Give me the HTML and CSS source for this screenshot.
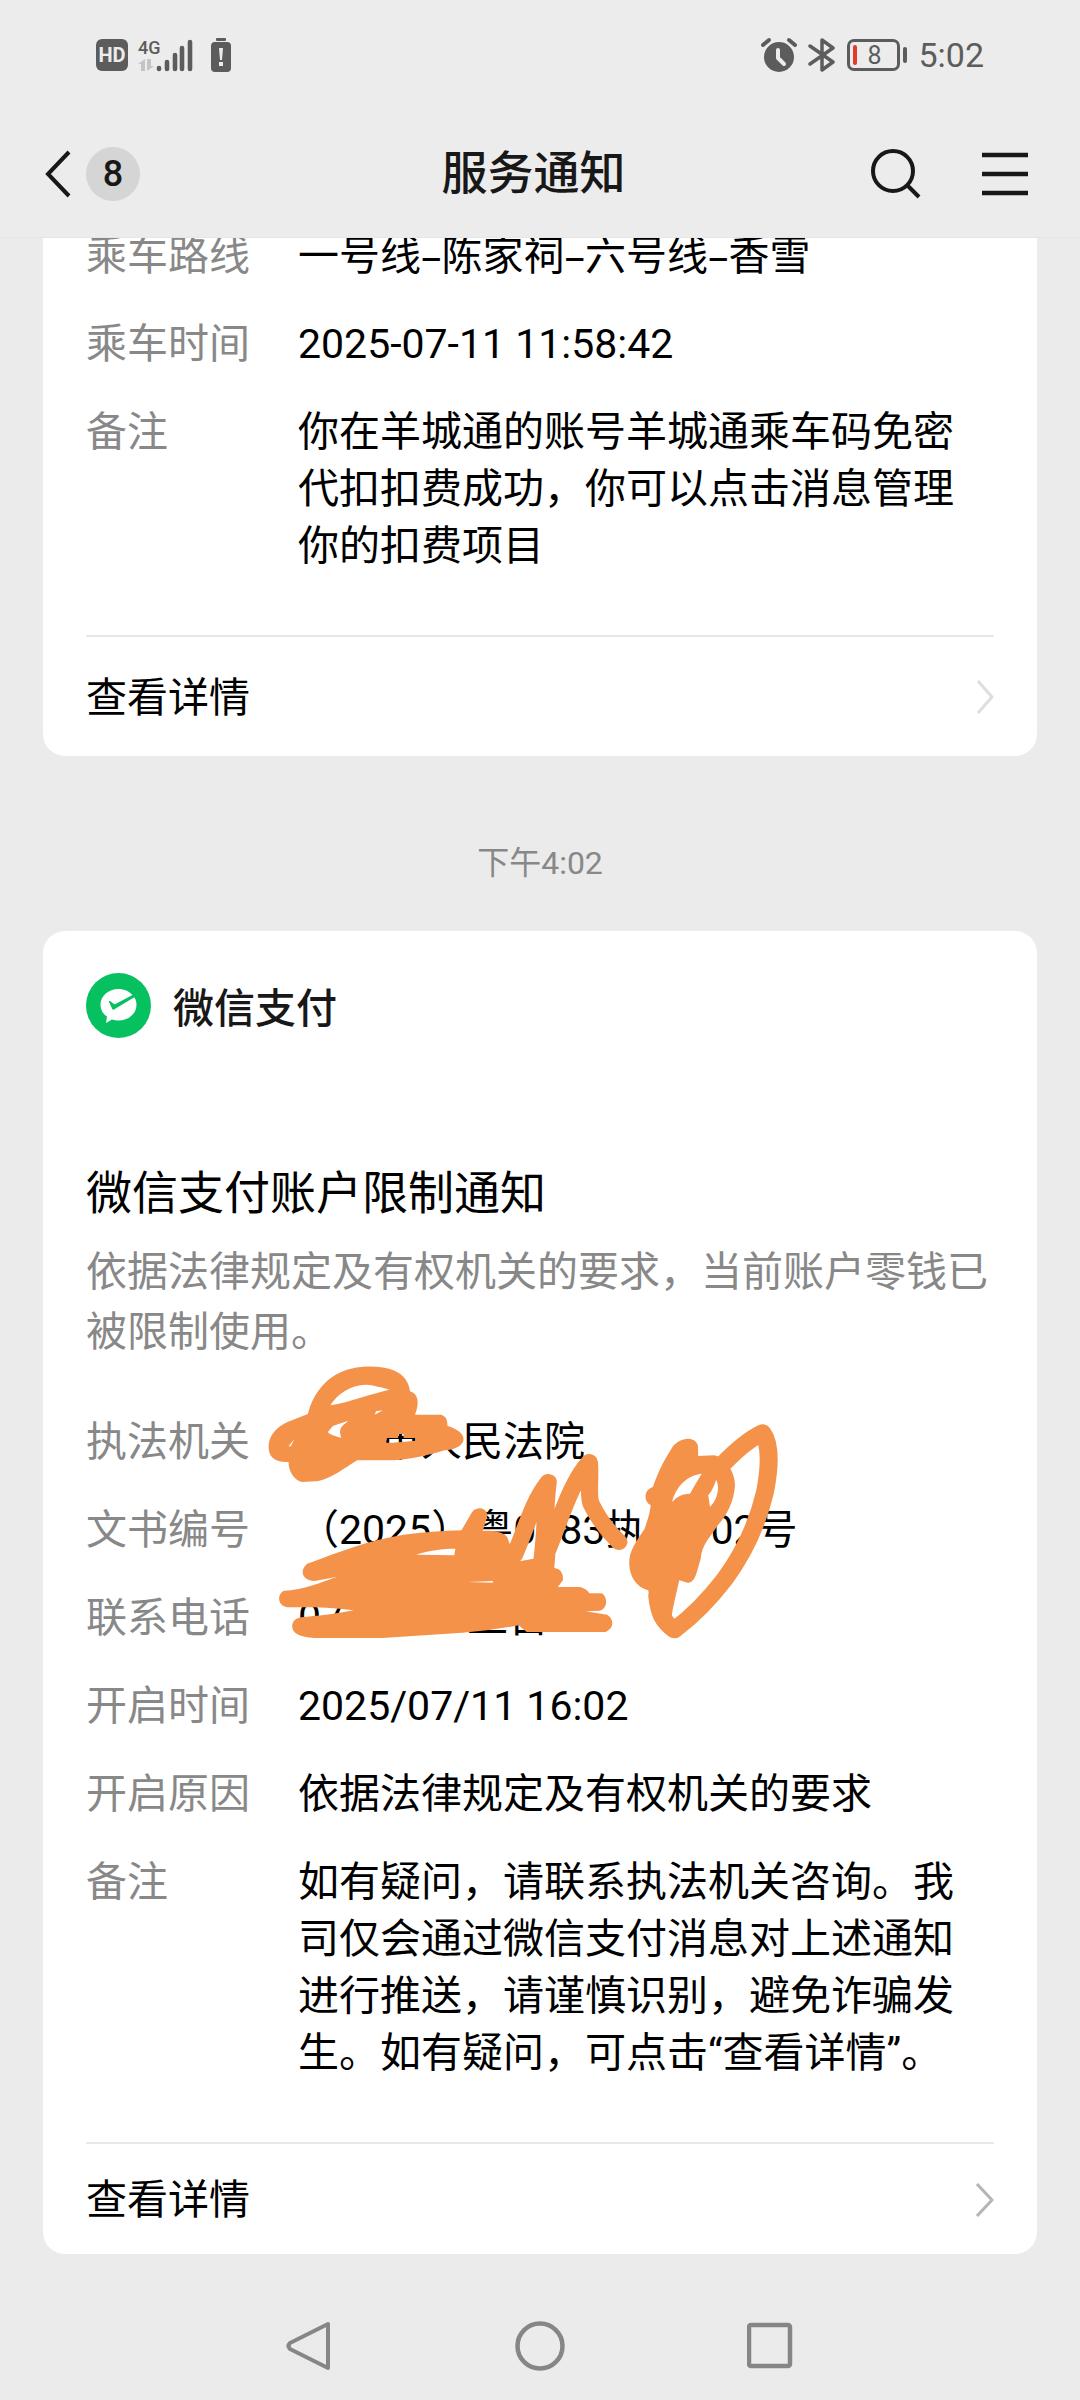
FILE: index.html
```html
<!DOCTYPE html>
<html lang="zh-CN">
<head>
<meta charset="utf-8">
<meta name="viewport" content="width=device-width, initial-scale=1">
<title>服务通知</title>
<link rel="stylesheet" href="styles.css">
</head>
<body>
<div class="status">
  <div class="status-side">
    <span class="hd">HD</span>
    <svg class="signal" width="56" height="36" viewBox="0 0 56 36" aria-label="4G">
      <text x="0" y="17" class="net">4G</text>
      <g fill="#c4c4c4"><path d="M7 22v12h-4v-7h-3zM9 34V22h4v7h3z"/></g>
      <g stroke="#5c5c5c" stroke-width="4.600" stroke-linecap="round"><path d="M21 31v1M29 25v7M37 18v14M44 11v21M52 5v27"/></g>
    </svg>
    <svg class="alert-battery" width="20" height="36" viewBox="0 0 20 36"><rect x="5" y="1" width="10" height="3" rx="1" fill="#5c5c5c"/><rect x="0" y="5" width="20" height="30" rx="4" fill="#5c5c5c"/><path d="M8 11h4l-1 12h-2zM8 25h4v4h-4z" fill="#ececec"/></svg>
  </div>
  <div class="status-side status-right">
    <svg width="36" height="36" viewBox="0 0 36 36"><circle cx="18" cy="20" r="15" fill="#5c5c5c"/><path d="M2 8l6-5M34 8l-6-5" stroke="#5c5c5c" stroke-width="4" stroke-linecap="round"/><path d="M17 13v8l6 6" fill="none" stroke="#ececec" stroke-width="4" stroke-linecap="round" stroke-linejoin="round"/></svg>
    <svg width="28" height="36" viewBox="0 0 28 36"><path d="M2 9l23 16-11 8V3l11 8L2 27" fill="none" stroke="#5c5c5c" stroke-width="3.5" stroke-linecap="round" stroke-linejoin="round"/></svg>
    <span class="battery"><span class="battery-body"><span class="charge"></span>8</span><span class="battery-tip"></span></span>
    <span class="clock">5:02</span>
  </div>
</div>
<header class="bar">
  <button class="back" aria-label="返回">
    <svg width="26" height="48" viewBox="0 0 26 48"><path d="M24 2L3 24l21 22" fill="none" stroke="#181818" stroke-width="4"/></svg>
    <span class="count">8</span>
  </button>
  <h1>服务通知</h1>
  <div class="actions">
    <button aria-label="搜索"><svg width="50" height="52" viewBox="0 0 50 52"><circle cx="22" cy="23" r="20" fill="none" stroke="#181818" stroke-width="4"/><path d="M36 37l12 12" stroke="#181818" stroke-width="4"/></svg></button>
    <button aria-label="菜单"><svg width="46" height="44" viewBox="0 0 46 44"><path d="M0 3h46M0 22h46M0 41h46" stroke="#181818" stroke-width="4.5"/></svg></button>
  </div>
</header>
<main>
  <section class="card card-first">
    <dl class="rows">
      <div><dt>乘车路线</dt><dd>一号线<span class="dash">–</span>陈家祠<span class="dash">–</span>六号线<span class="dash">–</span>香雪</dd></div>
      <div><dt>乘车时间</dt><dd>2025-07-11 11:58:42</dd></div>
      <div><dt>备注</dt><dd>你在羊城通的账号羊城通乘车码免密代扣扣费成功，你可以点击消息管理你的扣费项目</dd></div>
    </dl>
    <a class="more more-first" href="#ride">查看详情<svg width="20" height="38" viewBox="0 0 20 38"><path d="M4 2l14 16L4 34" fill="none" stroke="#dedede" stroke-width="3"/></svg></a>
  </section>
  <time class="stamp">下午4:02</time>
  <section class="card">
    <div class="sender">
      <svg width="65" height="65" viewBox="0 0 65 65"><circle cx="32.500" cy="32.500" r="32.500" fill="#07c160"/><path d="M32.500 16c-10 0-18 7-18 15.800 0 5 2.500 9 6.500 11.800l-1 6.400 6-3.400c2 .6 4.200 1 6.500 1 10 0 18-7 18-15.800 0-2.800-.8-5.400-2.200-7.600L28 36.500c-.7.500-1.300.300-1.700-.4L23 29c-.4-1 .2-1.400 1-.9l4 2.900c.5.300 1 .300 1.500.100L46.500 22c-3.300-3.700-8.300-6-14-6z" fill="#fff"/></svg>
      <h2>微信支付</h2>
    </div>
    <h3>微信支付账户限制通知</h3>
    <p class="desc">依据法律规定及有权机关的要求，当前账户零钱已被限制使用。</p>
    <dl class="rows marked">
      <div><dt>执法机关</dt><dd>　　市人民法院</dd></div>
      <div><dt>文书编号</dt><dd>（2025）粤0783执1　02号</dd></div>
      <div><dt>联系电话</dt><dd>07　　　工日</dd></div>
      <div><dt>开启时间</dt><dd>2025/07/11 16:02</dd></div>
      <div><dt>开启原因</dt><dd>依据法律规定及有权机关的要求</dd></div>
      <div><dt>备注</dt><dd>如有疑问，请联系执法机关咨询。我司仅会通过微信支付消息对上述通知进行推送，请谨慎识别，避免诈骗发生。如有疑问，可点击“查看详情”。</dd></div>
      <svg class="scribble" viewBox="0 0 1568 930" preserveAspectRatio="none" aria-hidden="true">
        <g fill="#f4924a" fill-rule="evenodd">
          <path d="M162 186C175 130 205 90 240 68 290 38 360 38 405 56 430 68 445 90 448 118 472 125 475 155 462 188L535 188C550 193 553 205 553 222 580 230 598 245 598 262 597 282 570 295 545 295 500 310 450 322 400 325L300 325C270 345 220 385 185 388L145 390C120 382 108 355 108 330 70 332 52 315 52 285 52 250 75 225 105 210ZM225 160C245 125 280 100 325 98 350 100 375 108 390 113 340 125 280 150 225 160ZM218 240L232 222 275 206C262 220 245 225 256 258 240 252 225 250 218 240ZM108 283L125 260 114 283ZM349 188L353 178 372 175ZM380 272L384 258 415 258 415 246 430 246 430 258 464 258 464 266 400 272Z"/>
          <path d="M160 635C250 600 330 565 430 548 485 540 540 537 592 535L622 480C635 462 662 466 665 490L652 537C690 532 720 545 722 560L738 610 755 628 855 608 852 648C870 650 878 665 876 685L862 705 925 705C940 710 948 718 950 724L985 724C1002 735 1002 768 980 776L940 778 1000 788C1020 800 1020 830 995 840L775 840 752 820C700 830 650 838 595 842L370 858 180 858C140 855 118 845 118 822 120 800 135 795 160 794 210 790 250 783 290 775 220 765 160 765 110 766 75 765 75 725 95 716 150 715 200 690 242 675L180 687C145 685 138 655 160 635ZM465 608C500 595 540 590 575 590L572 610ZM610 690L680 687 680 692Z"/>
          <path d="M1255 312L1300 310C1340 320 1358 370 1358 400 1355 450 1335 490 1310 520 1285 560 1265 580 1262 620 1250 660 1248 692 1225 692L1202 685C1195 720 1185 760 1180 795L1130 800 1115 715C1080 705 1062 670 1062 635 1060 600 1080 570 1105 530 1115 500 1120 480 1122 460 1103 450 1100 415 1128 405 1140 370 1150 340 1180 290 1200 255 1245 250 1254 280ZM1182 450C1190 410 1220 370 1265 365 1250 390 1240 410 1232 425 1205 425 1190 440 1182 450ZM1283 430C1295 415 1300 400 1305 383 1315 400 1312 440 1288 465Z"/>
        </g>
        <g fill="none" stroke="#f4924a" stroke-linecap="round" stroke-linejoin="round">
          <path stroke-width="48" d="M740 610C770 540 790 450 835 390 825 470 828 560 815 640 860 540 890 400 950 330 955 380 945 430 955 455 975 500 1000 535 1033 570"/>
          <path stroke-width="50" d="M1325 335C1370 285 1400 260 1435 242 1458 275 1455 350 1442 420 1420 520 1385 600 1330 680 1280 750 1230 800 1188 834 1160 810 1145 790 1140 730"/>
        </g>
      </svg>
    </dl>
    <a class="more" href="#limit">查看详情<svg width="20" height="38" viewBox="0 0 20 38"><path d="M3 2l15 16L3 34" fill="none" stroke="#b5b5b5" stroke-width="3"/></svg></a>
  </section>
</main>
<nav class="keys">
  <button aria-label="后退"><svg width="50" height="50" viewBox="0 0 50 50"><path d="M45 3v44L7 28q-3-3 0-6z" fill="none" stroke="#868686" stroke-width="4" stroke-linejoin="round"/></svg></button>
  <button aria-label="主页"><svg width="50" height="50" viewBox="0 0 50 50"><circle cx="25" cy="25" r="22.500" fill="none" stroke="#868686" stroke-width="4.500"/></svg></button>
  <button aria-label="最近任务"><svg width="50" height="50" viewBox="0 0 50 50"><rect x="2" y="4" width="41" height="41" rx="2" fill="none" stroke="#868686" stroke-width="4.500"/></svg></button>
</nav>
</body>
</html>
```
FILE: styles.css
```css
* { box-sizing: border-box; }
body {
  margin: 0;
  background: #ebebeb;
  color: #000;
  font-family: Roboto, "Noto Sans CJK SC", sans-serif;
  font-size: 41px;
  line-height: 57px;
}
h1, h2, h3, p, dl, dd { margin: 0; }
button { border: 0; padding: 0; background: none; color: inherit; font: inherit; display: flex; align-items: center; }
svg { display: block; flex: none; }

.status {
  position: relative;
  z-index: 1;
  height: 110px;
  padding: 0 96px;
  display: flex;
  align-items: center;
  justify-content: space-between;
  background: #ececec;
  color: #5c5c5c;
}
.status-side { display: flex; align-items: center; }
.status-right { gap: 11px; }
.hd {
  width: 32px;
  height: 32px;
  border-radius: 6px;
  background: #5c5c5c;
  color: #ececec;
  font-size: 20px;
  font-weight: 700;
  line-height: 32px;
  text-align: center;
}
.signal { margin-left: 10px; overflow: visible; }
.net { fill: #5c5c5c; font-size: 18px; font-weight: 500; }
.alert-battery { margin-left: 17px; }
.battery { display: flex; align-items: center; gap: 3px; }
.battery-body {
  width: 53px;
  height: 32px;
  padding: 3px;
  border: 3px solid #5c5c5c;
  border-radius: 7px;
  display: flex;
  align-items: center;
  gap: 10px;
  font-size: 25px;
}
.charge { width: 4px; height: 20px; border-radius: 2px; background: #e23b2e; }
.battery-tip { width: 4px; height: 16px; border-radius: 2px; background: #5c5c5c; }
.clock { font-size: 34px; }

.bar {
  position: relative;
  z-index: 1;
  height: 128px;
  padding: 0 52px 0 45px;
  border-bottom: 1px solid #e6e6e6;
  background: #ececec;
  color: #181818;
  display: grid;
  grid-template-columns: 1fr auto 1fr;
  align-items: center;
}
.back { gap: 15px; }
.count {
  width: 54px;
  height: 54px;
  border-radius: 50%;
  background: #d5d5d5;
  font-size: 36px;
  font-weight: 500;
  line-height: 54px;
  text-align: center;
}
h1 { margin-right: 6px; font-size: 46px; font-weight: 500; }
.actions { display: flex; justify-content: flex-end; align-items: center; gap: 61px; }

main { padding: 0 43px; }
.card {
  padding: 42px 43px 0;
  border-radius: 22px;
  background: #fff;
}
.card-first { padding-top: 0; margin-top: -10px; border-radius: 0 0 22px 22px; }
.rows { display: flex; flex-direction: column; gap: 31px; }
.rows > div { display: grid; grid-template-columns: 212px 1fr; }
dt, .desc { color: #888; }
dd { padding-right: 20px; }
.dash { font-family: "Open Sans", sans-serif; line-height: 1; }
.more {
  height: 112px;
  margin-top: 60px;
  padding-top: 3px;
  border-top: 2px solid #e8e8e8;
  color: #000;
  text-decoration: none;
  display: flex;
  align-items: center;
  justify-content: space-between;
}
.more-first { height: 121px; }
.stamp {
  display: block;
  padding: 87px 0 48px;
  color: #888;
  font-size: 32px;
  line-height: 40px;
  text-align: center;
}
.sender { display: flex; align-items: flex-end; gap: 22px; }
h2 { font-size: 41px; font-weight: 500; color: #181818; }
h3 { margin-top: 125px; font-size: 46px; font-weight: 400; line-height: 60px; }
.desc { margin-top: 19px; line-height: 60px; }
.marked { position: relative; margin-top: 52px; }
.scribble { position: absolute; left: 164px; top: -62px; width: 560px; height: 310px; }

.keys { padding: 67px 0 28px; display: flex; justify-content: center; gap: 182px; }
```
